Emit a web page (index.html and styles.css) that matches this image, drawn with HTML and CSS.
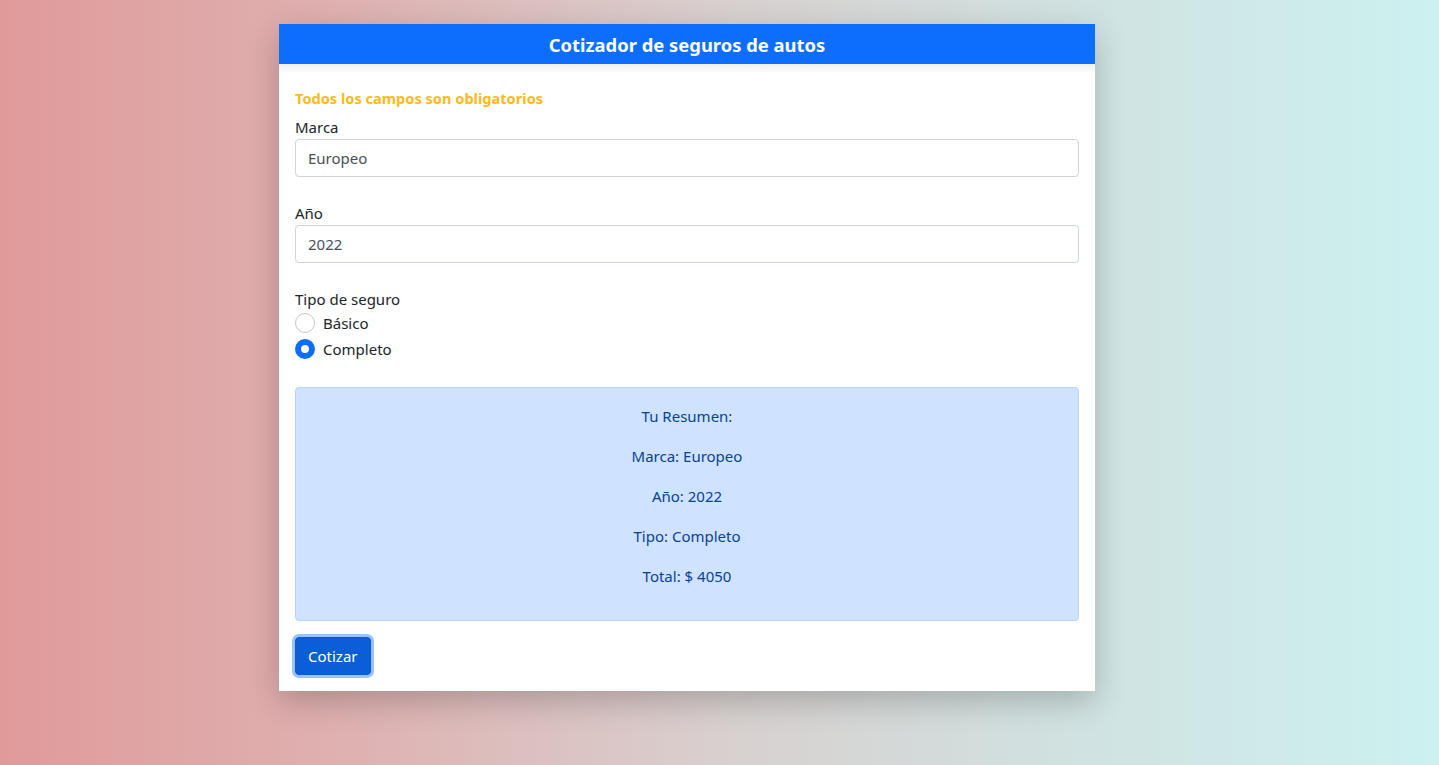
FILE: index.html
```html
<!DOCTYPE html>
<html lang="es">
<head>
<meta charset="utf-8">
<title>Cotizador de seguros de autos</title>
<link rel="stylesheet" href="styles.css">
</head>
<body>
<main class="card">
  <h1 class="card-header">Cotizador de seguros de autos</h1>
  <div class="card-strip"></div>
  <form class="card-body">
    <p class="notice">Todos los campos son obligatorios</p>
    <div class="field">
      <label class="label" for="marca">Marca</label>
      <div class="input" id="marca">Europeo</div>
    </div>
    <div class="field">
      <label class="label" for="anio">Año</label>
      <div class="input" id="anio">2022</div>
    </div>
    <div class="field">
      <span class="label">Tipo de seguro</span>
      <div class="check"><span class="radio"></span><span>Básico</span></div>
      <div class="check"><span class="radio checked"></span><span>Completo</span></div>
    </div>
    <div class="alert">
      <p>Tu Resumen:</p>
      <p>Marca: Europeo</p>
      <p>Año: 2022</p>
      <p>Tipo: Completo</p>
      <p>Total: $ 4050</p>
    </div>
    <button type="button" class="btn">Cotizar</button>
  </form>
</main>
</body>
</html>
```

FILE: styles.css
```css
* { box-sizing: border-box; }
html, body { height: 100%; }
body {
  margin: 0;
  font-family: "Noto Sans", "Open Sans", sans-serif;
  font-size: 16px;
  line-height: 24px;
  color: #212529;
  background: linear-gradient(90deg, #e09a9a 0%, #dfb2b2 25%, #d8d0cf 50%, #d0e2e1 75%, #ccf1f0 100%);
  padding-top: 24px;
}
.card {
  width: 816px;
  margin: 0 0 0 279px;
  background: #fff;
  box-shadow: 0 10px 30px rgba(0, 0, 0, 0.22);
}
.card-header {
  margin: 0;
  height: 40px;
  background: #0d6efd;
  color: #fff;
  font-size: 18.4px;
  font-weight: 700;
  line-height: 42px;
  text-align: center;
}
.card-strip {
  height: 8px;
  background: linear-gradient(180deg, #f1f1f1, #fafafa);
}
.card-body {
  padding: 14px 16px 16px;
  display: flex;
  flex-direction: column;
  align-items: stretch;
}
.notice {
  margin: 0 0 5px;
  color: #fdba1a;
  font-weight: 700;
  font-size: 14.6px;
}
.field {
  display: flex;
  flex-direction: column;
  margin-bottom: 24px;
}
.label { display: block; font-size: 15px; }
.input {
  height: 38px;
  border: 1px solid #ced4da;
  border-radius: 4px;
  padding: 6px 12px;
  font-size: 15px;
  color: #495057;
}
.check {
  display: flex;
  align-items: center;
  gap: 8px;
  margin-bottom: 2px;
  font-size: 15px;
}
.check:last-child { margin-bottom: 0; }
.radio {
  width: 20px;
  height: 20px;
  border-radius: 50%;
  border: 1px solid #c4c8cc;
  background: #fff;
  flex: none;
}
.radio.checked {
  border: 6px solid #0d6efd;
}
.alert {
  margin-top: 2px;
  margin-bottom: 16px;
  background: #cfe2ff;
  border: 1px solid #b6d4fe;
  border-radius: 4px;
  color: #084298;
  padding: 16px;
  text-align: center;
  font-size: 15px;
}
.alert p { margin: 0 0 16px; }
.btn {
  align-self: flex-start;
  height: 38px;
  padding: 6px 12px;
  font-family: inherit;
  font-size: 15px;
  line-height: 24px;
  color: #fff;
  background: #0b5ed7;
  border: 1px solid #0a58ca;
  border-radius: 4px;
  box-shadow: 0 0 0 3px #98c1fe;
}
```
